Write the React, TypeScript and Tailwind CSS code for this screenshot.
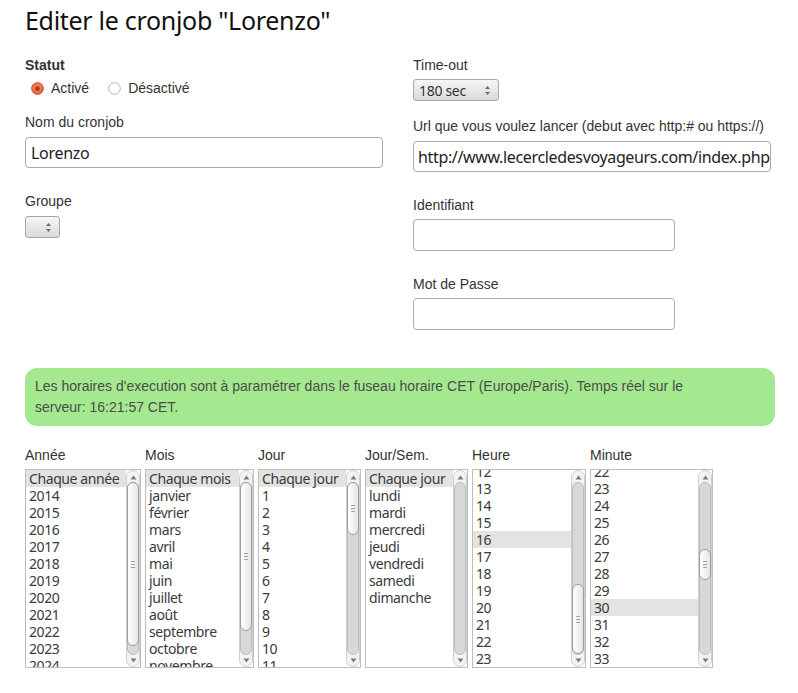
import React from "react";

const NOTO = "font-['Noto_Sans',sans-serif]";
const LIB = "font-['Liberation_Sans',Arial,sans-serif]";

function Spinner() {
  return (
    <svg width="7" height="11" viewBox="0 0 7 11">
      <polygon points="3.5,1 6,4 1,4" fill="#6b6b6b" />
      <polygon points="1,7 6,7 3.5,10" fill="#6b6b6b" />
    </svg>
  );
}

function Radio({ checked }: { checked: boolean }) {
  if (checked) {
    return (
      <svg width="13" height="13" viewBox="0 0 13 13">
        <defs>
          <radialGradient id="rg" cx="50%" cy="40%" r="60%">
            <stop offset="0%" stopColor="#f48a62" />
            <stop offset="100%" stopColor="#e0613a" />
          </radialGradient>
        </defs>
        <circle cx="6.5" cy="6.5" r="6" fill="url(#rg)" stroke="#c9532f" strokeWidth="0.8" />
        <circle cx="6.5" cy="6.5" r="2.3" fill="#a8381a" />
      </svg>
    );
  }
  return (
    <svg width="13" height="13" viewBox="0 0 13 13">
      <circle cx="6.5" cy="6.5" r="5.8" fill="#ffffff" stroke="#a9a9a9" strokeWidth="0.9" />
    </svg>
  );
}

function Arrow({ up }: { up: boolean }) {
  return (
    <svg width="7" height="5" viewBox="0 0 7 5">
      {up ? (
        <polygon points="3.5,0.5 6.5,4.5 0.5,4.5" fill="#7a7a7a" />
      ) : (
        <polygon points="0.5,0.5 6.5,0.5 3.5,4.5" fill="#7a7a7a" />
      )}
    </svg>
  );
}

function Scrollbar({ thumb }: { thumb?: { top: number; height: number } }) {
  return (
    <div className="w-[14px] h-full flex flex-col items-center rounded-[7px] border border-[#cfcfcf] bg-[#f3f3f3] shrink-0">
      <div className="h-[11px] flex items-center justify-center pt-[2px]">
        <Arrow up />
      </div>
      <div className="relative flex-1 w-[12px] rounded-full bg-[#d8d8d8] border border-[#bdbdbd]">
        {thumb && (
          <div
            className="absolute left-[-1px] right-[-1px] rounded-full border border-[#9c9c9c] bg-linear-to-r from-[#ffffff] to-[#e6e6e6] flex flex-col items-center justify-center gap-[2px]"
            style={{ top: thumb.top - 1, height: thumb.height }}
          >
            <div className="w-[4px] h-px bg-[#a0a0a0]" />
            <div className="w-[4px] h-px bg-[#a0a0a0]" />
            <div className="w-[4px] h-px bg-[#a0a0a0]" />
          </div>
        )}
      </div>
      <div className="h-[11px] flex items-center justify-center pb-[1px]">
        <Arrow up={false} />
      </div>
    </div>
  );
}

function ListBox({
  label,
  widthClass,
  items,
  highlight,
  shifted,
  thumb,
}: {
  label: string;
  widthClass: string;
  items: string[];
  highlight: string;
  shifted?: boolean;
  thumb?: { top: number; height: number };
}) {
  return (
    <div className={`flex flex-col ${widthClass}`}>
      <div className={`${LIB} text-[14px] leading-[16px] text-[#333]`}>{label}</div>
      <div className="mt-[6px] flex h-[199px] border border-[#bdbdbd] bg-white overflow-hidden">
        <div className="flex-1 overflow-hidden">
          <div className={shifted ? "mt-[-7px]" : ""}>
            {items.map((it) => (
              <div
                key={it}
                className={`${NOTO} h-[17px] leading-[17px] pl-[3px] text-[14px] tracking-[-0.4px] whitespace-nowrap text-[#3a3a3a] ${
                  it === highlight ? "bg-[#e4e3e1]" : ""
                }`}
              >
                {it}
              </div>
            ))}
          </div>
        </div>
        <Scrollbar thumb={thumb} />
      </div>
    </div>
  );
}

export default function App() {
  const years = ["Chaque année", ...Array.from({ length: 12 }, (_, i) => String(2014 + i))];
  const months = [
    "Chaque mois",
    "janvier",
    "février",
    "mars",
    "avril",
    "mai",
    "juin",
    "juillet",
    "août",
    "septembre",
    "octobre",
    "novembre",
    "décembre",
  ];
  const days = ["Chaque jour", ...Array.from({ length: 13 }, (_, i) => String(i + 1))];
  const weekdays = ["Chaque jour", "lundi", "mardi", "mercredi", "jeudi", "vendredi", "samedi", "dimanche"];
  const hours = Array.from({ length: 12 }, (_, i) => String(12 + i));
  const minutes = Array.from({ length: 12 }, (_, i) => String(22 + i));

  return (
    <div className="w-[798px] h-[693px] bg-white overflow-hidden pl-[25px] pt-[4px]">
      <h1 className={`${NOTO} text-[25px] leading-[32px] text-[#111] tracking-[-0.3px]`}>
        Editer le cronjob "Lorenzo"
      </h1>

      <div className="mt-[21px] flex gap-[30px]">
        {/* left column */}
        <div className="w-[358px] flex flex-col">
          <div className={`${LIB} text-[14px] leading-[16px] font-bold text-[#333]`}>Statut</div>
          <div className={`${LIB} mt-[7px] flex items-center h-[16px] text-[14px] text-[#333]`}>
            <div className="ml-[6px] flex items-center">
              <Radio checked />
            </div>
            <span className="ml-[7px]">Activé</span>
            <div className="ml-[19px] flex items-center">
              <Radio checked={false} />
            </div>
            <span className="ml-[7px]">Désactivé</span>
          </div>
          <div className={`${LIB} mt-[18px] text-[14px] leading-[16px] text-[#333]`}>Nom du cronjob</div>
          <div className="mt-[7px] h-[31px] rounded-[4px] border border-[#a9a9a9] bg-white flex items-center pl-[5px]">
            <span className={`${NOTO} text-[16px] tracking-[-0.3px] text-[#222]`}>Lorenzo</span>
          </div>
          <div className={`${LIB} mt-[25px] text-[14px] leading-[16px] text-[#333]`}>Groupe</div>
          <div className="mt-[7px] w-[35px] h-[22px] rounded-[3px] border border-[#a6a6a6] bg-linear-to-b from-[#f6f6f6] to-[#dadada] flex items-center justify-end pr-[7px]">
            <Spinner />
          </div>
        </div>

        {/* right column */}
        <div className="w-[358px] flex flex-col">
          <div className={`${LIB} text-[14px] leading-[16px] text-[#333]`}>Time-out</div>
          <div className="mt-[6px] w-[86px] h-[22px] rounded-[3px] border border-[#a6a6a6] bg-linear-to-b from-[#f6f6f6] to-[#dadada] flex items-center justify-between pl-[5px] pr-[7px]">
            <span className={`${NOTO} text-[14px] tracking-[-0.3px] text-[#333]`}>180 sec</span>
            <Spinner />
          </div>
          <div className={`${LIB} mt-[17px] text-[14px] leading-[16px] text-[#333] whitespace-nowrap`}>
            Url que vous voulez lancer (debut avec http:# ou https://)
          </div>
          <div className="mt-[7px] h-[31px] rounded-[4px] border border-[#a9a9a9] bg-white flex items-center pl-[4px] overflow-hidden">
            <span className={`${NOTO} text-[16px] tracking-[-0.35px] text-[#222] whitespace-nowrap`}>
              http://www.lecercledesvoyageurs.com/index.php?
            </span>
          </div>
          <div className={`${LIB} mt-[25px] text-[14px] leading-[16px] text-[#333]`}>Identifiant</div>
          <div className="mt-[6px] w-[262px] h-[32px] rounded-[4px] border border-[#a9a9a9] bg-white" />
          <div className={`${LIB} mt-[25px] text-[14px] leading-[16px] text-[#333]`}>Mot de Passe</div>
          <div className="mt-[6px] w-[262px] h-[32px] rounded-[4px] border border-[#a9a9a9] bg-white" />
        </div>
      </div>

      <div className={`${LIB} mt-[38px] w-[750px] rounded-[12px] bg-[#a4e98f] py-[8px] pl-[10px] pr-[20px] text-[14px] leading-[21px] text-[#4b4b4b]`}>
        Les horaires d'execution sont à paramétrer dans le fuseau horaire CET (Europe/Paris). Temps réel sur le
        <br />
        serveur: 16:21:57 CET.
      </div>

      <div className="mt-[21px] flex gap-[4px]">
        <ListBox label="Année" widthClass="w-[116px]" items={years} highlight="Chaque année" thumb={{ top: 0, height: 164 }} />
        <ListBox label="Mois" widthClass="w-[109px]" items={months} highlight="Chaque mois" thumb={{ top: 0, height: 149 }} />
        <ListBox label="Jour" widthClass="w-[103px]" items={days} highlight="Chaque jour" thumb={{ top: 0, height: 53 }} />
        <ListBox label="Jour/Sem." widthClass="w-[103px]" items={weekdays} highlight="Chaque jour" />
        <ListBox label="Heure" widthClass="w-[114px]" items={hours} highlight="16" shifted thumb={{ top: 102, height: 70 }} />
        <ListBox label="Minute" widthClass="w-[123px]" items={minutes} highlight="30" shifted thumb={{ top: 67, height: 31 }} />
      </div>
    </div>
  );
}
